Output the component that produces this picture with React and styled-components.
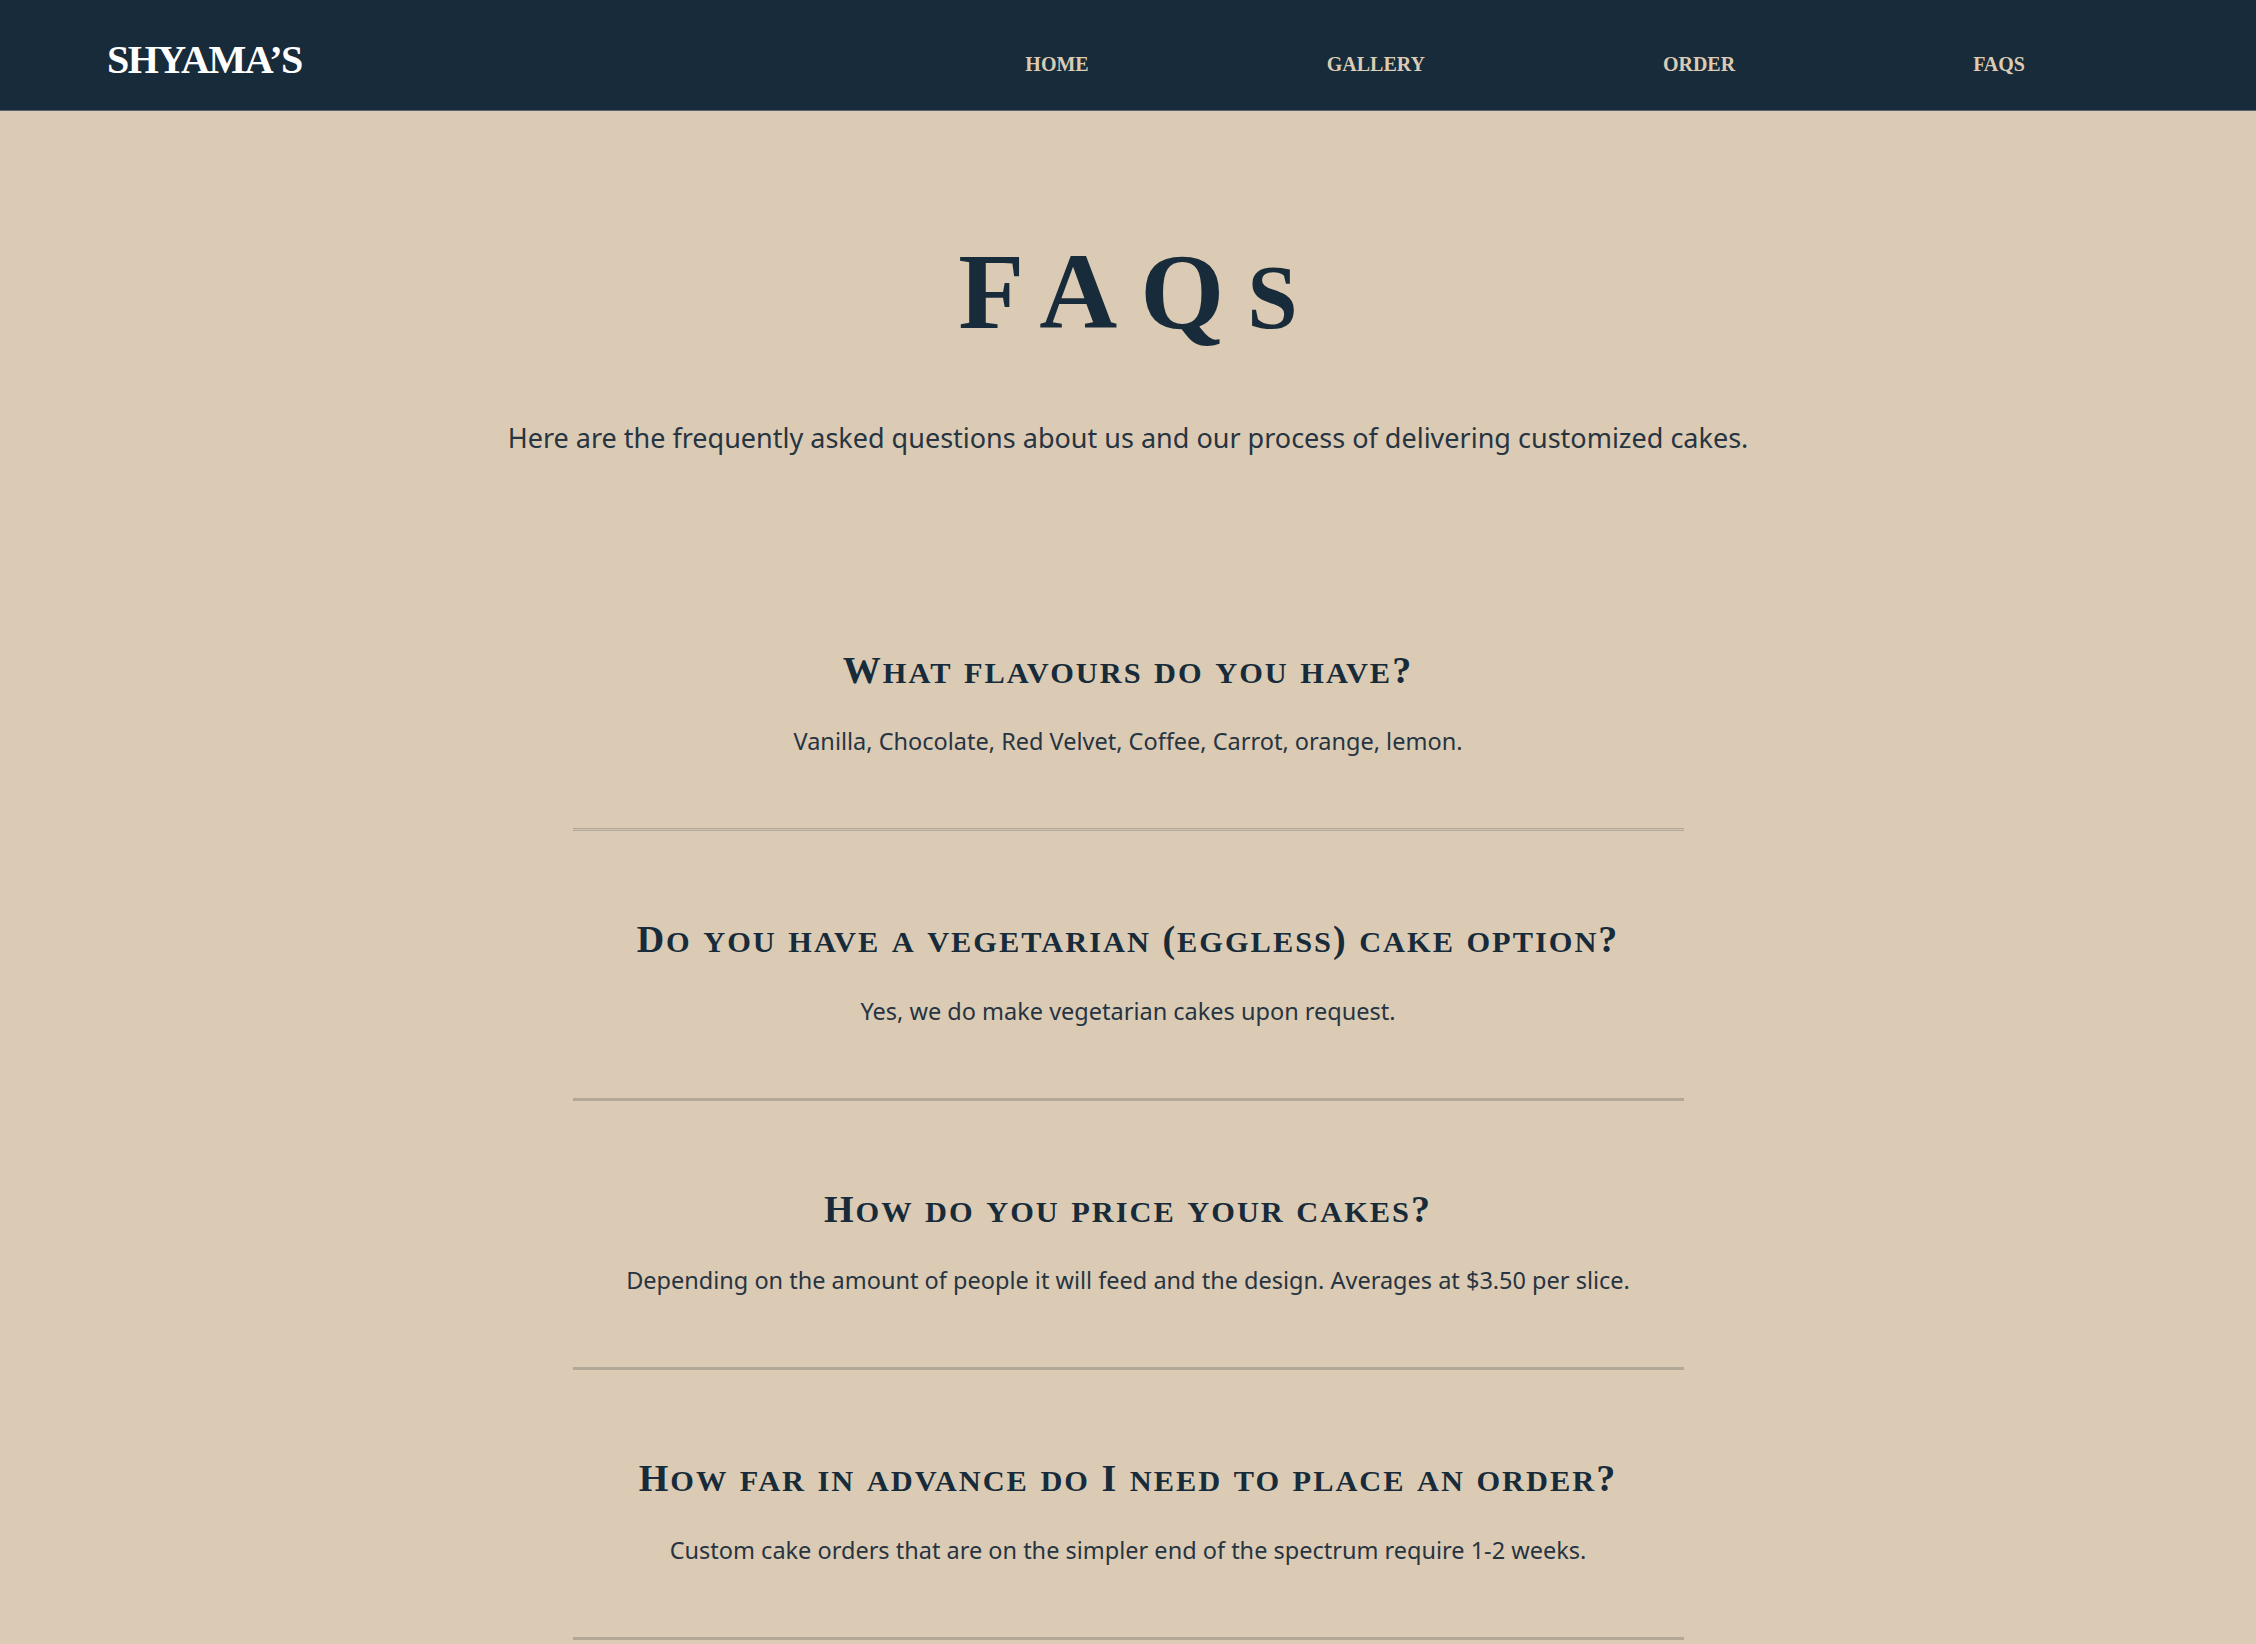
import React from 'react'
import styled, { createGlobalStyle } from 'styled-components'

const colors = {
  navy: '#172b3a',
  beige: '#dbcbb4',
  text: '#273441',
  rule: '#b1a898',
}

const GlobalStyle = createGlobalStyle`
  html, body {
    margin: 0;
    padding: 0;
    background-color: ${colors.beige};
  }
  body {
    font-family: 'Noto Sans', 'Open Sans', sans-serif;
    color: ${colors.text};
  }
  * {
    box-sizing: border-box;
  }
`

const Header = styled.header`
  display: flex;
  align-items: flex-start;
  height: 111px;
  padding: 40px 231px 0 107px;
  background-color: ${colors.navy};
  border-bottom: 1px solid #56646e;
`

const Logo = styled.a`
  font-family: 'Liberation Serif', 'Times New Roman', serif;
  font-weight: 700;
  font-size: 40px;
  line-height: 40px;
  letter-spacing: -1.5px;
  color: #ffffff;
  text-decoration: none;
`

const Nav = styled.nav`
  margin-left: auto;
`

const NavList = styled.ul`
  display: flex;
  gap: 238px;
  margin: 14px 0 0;
  padding: 0;
  list-style: none;
`

const NavLink = styled.a`
  font-family: 'Liberation Serif', 'Times New Roman', serif;
  font-weight: 700;
  font-size: 20px;
  line-height: 20px;
  color: ${colors.beige};
  text-decoration: none;
`

const Main = styled.main`
  display: flex;
  flex-direction: column;
  align-items: center;
  padding-top: 127px;
  text-align: center;
`

const Title = styled.h1`
  margin: 0;
  font-family: 'Liberation Serif', 'Times New Roman', serif;
  font-weight: 700;
  font-size: 108px;
  line-height: 1;
  letter-spacing: 23px;
  color: ${colors.navy};
  padding-left: 23px;
`

const Lower = styled.span`
  font-size: ${({ $scale }) => $scale}em;
  text-transform: uppercase;
`

const Intro = styled.p`
  margin: 73px 0 0;
  font-size: 27px;
  line-height: 1.4;
  color: ${colors.text};
`

const List = styled.section`
  width: 1111px;
  margin-top: 105px;
`

const Item = styled.article`
  padding-top: 86px;
`

const Question = styled.h2`
  margin: 0;
  font-family: 'Liberation Serif', 'Times New Roman', serif;
  font-weight: 700;
  font-size: 38px;
  line-height: 1.2;
  letter-spacing: 2px;
  color: ${colors.navy};
`

const Answer = styled.p`
  margin: 32px 0 70px;
  font-size: 23.5px;
  line-height: 1.4;
  color: ${colors.text};
`

const Rule = styled.hr`
  margin: 0;
  height: 3px;
  border: none;
  border-top: 1px solid ${colors.rule};
  border-bottom: 1px solid ${colors.rule};
  background-color: ${({ $double }) => ($double ? '#cfc4b2' : colors.rule)};
`

// capitals stay full size, lowercase runs become smaller capitals
function SmallCaps({ text, scale = 0.8 }) {
  return text.split(/([a-z]+)/).map((part, i) =>
    i % 2 === 1 ? (
      <Lower key={i} $scale={scale}>
        {part}
      </Lower>
    ) : (
      part
    )
  )
}

const links = ['HOME', 'GALLERY', 'ORDER', 'FAQS']

const faqs = [
  {
    id: 1,
    question: 'What flavours do you have?',
    answer: 'Vanilla, Chocolate, Red Velvet, Coffee, Carrot, orange, lemon.',
  },
  {
    id: 2,
    question: 'Do you have a vegetarian (eggless) cake option?',
    answer: 'Yes, we do make vegetarian cakes upon request.',
  },
  {
    id: 3,
    question: 'How do you price your cakes?',
    answer:
      'Depending on the amount of people it will feed and the design. Averages at $3.50 per slice.',
  },
  {
    id: 4,
    question: 'How far in advance do I need to place an order?',
    answer:
      'Custom cake orders that are on the simpler end of the spectrum require 1-2 weeks.',
  },
]

function App() {
  return (
    <React.Fragment>
      <GlobalStyle />
      <Header>
        <Logo href="#">SHYAMA&rsquo;S</Logo>
        <Nav>
          <NavList>
            {links.map((link) => (
              <li key={link}>
                <NavLink href="#">{link}</NavLink>
              </li>
            ))}
          </NavList>
        </Nav>
      </Header>
      <Main>
        <Title>
          <SmallCaps text="FAQs" scale={0.84} />
        </Title>
        <Intro>
          Here are the frequently asked questions about us and our process of
          delivering customized cakes.
        </Intro>
        <List>
          {faqs.map(({ id, question, answer }) => (
            <Item key={id}>
              <Question>
                <SmallCaps text={question} />
              </Question>
              <Answer>{answer}</Answer>
              <Rule $double={id === 1} />
            </Item>
          ))}
        </List>
      </Main>
    </React.Fragment>
  )
}

export default App
